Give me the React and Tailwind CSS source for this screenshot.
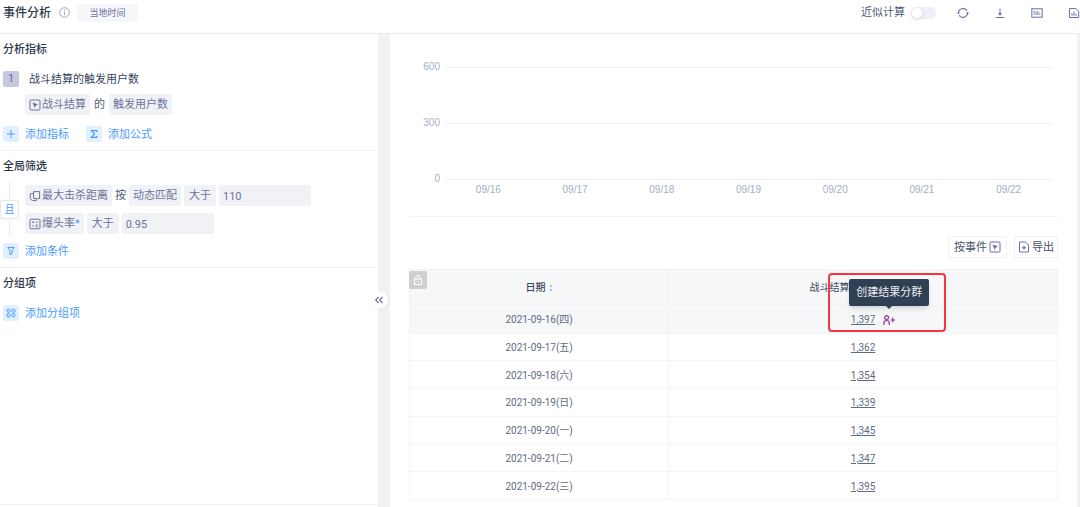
import React from 'react';

const rows = [
  ['2021-09-16(四)', '1,397'],
  ['2021-09-17(五)', '1,362'],
  ['2021-09-18(六)', '1,354'],
  ['2021-09-19(日)', '1,339'],
  ['2021-09-20(一)', '1,345'],
  ['2021-09-21(二)', '1,347'],
  ['2021-09-22(三)', '1,395'],
];
const days = ['09/16', '09/17', '09/18', '09/19', '09/20', '09/21', '09/22'];
const ticks = ['600', '300', '0'];

function Icon({ className = 'size-3', children, width = 1 }) {
  return (
    <svg
      viewBox="0 0 12 12"
      className={`shrink-0 ${className}`}
      fill="none"
      stroke="currentColor"
      strokeWidth={width}
      aria-hidden="true"
    >
      {children}
    </svg>
  );
}

function EventIcon({ className }) {
  return (
    <Icon className={className}>
      <rect x="1" y="1" width="10" height="10" rx="1" />
      <path d="M3.8 3.8l4.8 1.7-2 .9-.9 2.2z" fill="currentColor" strokeWidth="0.4" />
    </Icon>
  );
}

function Tag({ children, className = '' }) {
  return (
    <button
      type="button"
      className={`flex h-[21px] shrink-0 items-center justify-center gap-px rounded-xs bg-[#f1f2f6] px-1 pt-px text-[#6d729c] ${className}`}
    >
      {children}
    </button>
  );
}

function ValueInput({ label, value }) {
  return (
    <input
      type="text"
      aria-label={label}
      defaultValue={value}
      className="h-[21px] w-[92px] rounded-xs bg-[#f1f2f6] px-1 pt-px text-[#6d729c] outline-none"
    />
  );
}

function AddButton({ icon, children }) {
  return (
    <button type="button" className="flex h-4 items-center gap-1.5 text-[#4a9cfb]">
      <span className="flex size-4 items-center justify-center rounded-xs bg-[#e1f0fe]">{icon}</span>
      <span className="pt-px">{children}</span>
    </button>
  );
}

function SectionTitle({ children }) {
  return <h2 className="h-4 font-medium leading-4 text-[#2c374b]">{children}</h2>;
}

function SortIcon() {
  return (
    <svg viewBox="0 0 4 8" className="h-2 w-1 text-[#a9bdd6]" fill="currentColor" aria-hidden="true">
      <path d="M2 .6L3.8 3H.2zM2 7.4L.2 5h3.6z" />
    </svg>
  );
}

function Header() {
  return (
    <header className="flex h-[34px] items-center border-b border-[#e9eaf0] pb-2 pl-[3px]">
      <h1 className="pt-px text-[12px] font-medium text-[#2c374b]">事件分析</h1>
      <Icon className="ml-2 size-[11px] text-[#8a90b4]" width={0.9}>
        <circle cx="6" cy="6" r="5.2" />
        <path d="M6 5.2v3.6M6 3v1.2" />
      </Icon>
      <button type="button" className="ml-[7px] h-[18px] w-[61px] rounded-xs bg-[#f6f7fa] text-[9px] text-[#6d729c]">
        当地时间
      </button>
      <label className="ml-auto flex items-center gap-1.5 text-[#505c74]">
        <span className="pt-px">近似计算</span>
        <input type="checkbox" role="switch" className="peer sr-only" />
        <span className="flex h-3 w-[25px] rounded-full bg-[#eff0f5] peer-checked:justify-end peer-checked:bg-[#4a9cfb]">
          <span className="size-3 rounded-full border border-[#ececf1] bg-white shadow-sm" />
        </span>
      </label>
      <div className="ml-[21px] flex gap-[25px] text-[#6a70a4]">
        <button type="button" aria-label="刷新">
          <Icon width={1.1}>
            <path d="M1.5 6.400A4.600 4.600 0 0 1 10 3.800M10.500 5.600A4.600 4.600 0 0 1 2 8.200" />
            <path d="M9 5.400h3L10.500 7.400zM3 6.600H0l1.500-2z" fill="currentColor" stroke="none" />
          </Icon>
        </button>
        <button type="button" aria-label="下载">
          <Icon>
            <path d="M6 1.500v6.500M1.800 10.500h8.400" />
            <path d="M4 6h4L6 8.800z" fill="currentColor" stroke="none" />
          </Icon>
        </button>
        <button type="button" aria-label="SQL">
          <Icon>
            <rect x="0.8" y="1.8" width="10.4" height="8.4" />
            <path
              d="M4.2 4.6H2.6V6h1.5v1.4H2.5M5.2 4.6h1.5v2.8H5.2zM6.3 6.8l.8 1M8 4.4v3h1.6"
              strokeWidth="0.6"
            />
          </Icon>
        </button>
        <button type="button" aria-label="报表">
          <Icon>
            <path d="M1.500 1.500h6.300l2.900 2.800v6.200H1.500z" />
            <path d="M4 6.200v2.600M6 4.600v4.200M8 6.800v2" />
          </Icon>
        </button>
      </div>
    </header>
  );
}

function Sidebar() {
  return (
    <aside className="flex w-[378px] shrink-0 flex-col">
      <section className="border-b border-[#f0f1f4] pt-2 pr-1 pb-2 pl-[3px]">
        <SectionTitle>分析指标</SectionTitle>
        <div className="mt-[13px] flex h-4 items-center gap-[10px]">
          <span className="flex size-4 items-center justify-center rounded-xs bg-[#c5c8df] text-[10px] text-[#5d628c]">
            1
          </span>
          <span className="pt-px text-[#36435a]">战斗结算的触发用户数</span>
        </div>
        <div className="mt-[7px] flex items-center gap-[3px] pl-[22px]">
          <Tag>
            <EventIcon className="size-3" />
            战斗结算
          </Tag>
          <span className="px-px pt-px text-[#505c74]">的</span>
          <Tag>触发用户数</Tag>
        </div>
        <div className="mt-[11px] flex gap-[17px]">
          <AddButton icon={<Icon><path d="M6 2v8M2 6h8" /></Icon>}>添加指标</AddButton>
          <AddButton icon={<Icon width={1.2}><path d="M8.800 4V2.600H3.400L6.600 6 3.400 9.400h5.400V8" /></Icon>}>添加公式</AddButton>
        </div>
      </section>

      <section className="border-b border-[#f0f1f4] pt-2 pb-2">
        <div className="pl-[3px]">
          <SectionTitle>全局筛选</SectionTitle>
        </div>
        <div className="mt-[7px] flex gap-[6px]">
          <div className="flex w-[19px] flex-col items-center">
            <span className="w-px flex-1 bg-[#e6e8ee]" />
            <button
              type="button"
              className="flex h-[19px] w-[19px] items-center justify-center rounded-xs border border-[#e4e6ec] pt-px text-[10px] text-[#4a9cfb]"
            >
              且
            </button>
            <span className="w-px flex-1 bg-[#e6e8ee]" />
          </div>
          <div className="flex flex-col gap-[7px] py-[3px]">
            <div className="flex items-center gap-[3px]">
              <Tag>
                <Icon>
                  <path d="M4.600 8.400V1.600h6v6.800H8.400M4.600 3.600H1.200v5.200l2.400 1.800h3.800V8.400H4.600" />
                </Icon>
                最大击杀距离
              </Tag>
              <span className="pt-px text-[#505c74]">按</span>
              <Tag>动态匹配</Tag>
              <Tag className="min-w-8">大于</Tag>
              <ValueInput label="最大击杀距离" value="110" />
            </div>
            <div className="flex items-center gap-[3px]">
              <Tag>
                <Icon>
                  <rect x="1" y="1.2" width="10" height="9.6" rx="1" />
                  <path d="M3 4.200h2M4 3.200v2M3 7.800h2M6.400 4.200h2.800M6.400 7h2.800M6.400 8.800h2.800" strokeWidth="0.8" />
                </Icon>
                <span>
                  爆头率<span className="text-[#4a9cfb]">*</span>
                </span>
              </Tag>
              <Tag className="min-w-8">大于</Tag>
              <ValueInput label="爆头率" value="0.95" />
            </div>
          </div>
        </div>
        <div className="mt-[6px] pl-[3px]">
          <AddButton icon={<Icon><path d="M2.800 2.400h6.400L7 5.600v3L5 9.800V5.600z" /></Icon>}>添加条件</AddButton>
        </div>
      </section>

      <section className="pt-2 pl-[3px]">
        <SectionTitle>分组项</SectionTitle>
        <div className="mt-[13px]">
          <AddButton
            icon={
              <Icon>
                <rect x="2" y="2.2" width="3" height="3" rx="1" />
                <rect x="7" y="2.2" width="3" height="3" rx="1" />
                <rect x="2" y="6.8" width="3" height="3" rx="1" />
                <rect x="7" y="6.8" width="3" height="3" rx="1" />
              </Icon>
            }
          >
            添加分组项
          </AddButton>
        </div>
      </section>
      <div className="mt-auto h-[3px] border-t border-[#f0f1f4]" />
    </aside>
  );
}

function Chart() {
  return (
    <div className="border-b border-[#f2f3f6] pt-[29px] pr-1.5 pb-5 font-['Liberation_Sans','Noto_Sans_CJK_SC',sans-serif] text-[10px] text-[#a3aec5]">
      <div className="flex flex-col gap-12">
        {ticks.map((t) => (
          <div key={t} className="flex h-2 items-center gap-[5px] leading-2">
            <span className="w-[31px] text-right">{t}</span>
            <span className="h-px flex-1 bg-[#eff1f6]" />
          </div>
        ))}
      </div>
      <div className="grid grid-cols-7 pt-px pl-9 text-center leading-3">
        {days.map((d) => (
          <span key={d}>{d}</span>
        ))}
      </div>
    </div>
  );
}

function CreateGroupButton() {
  return (
    <span className="absolute top-1/2 left-full ml-2 flex -translate-y-1/2">
      <button type="button" aria-label="创建结果分群" className="text-[#9a2f9c]">
        <Icon width={1.2}>
          <circle cx="3.6" cy="3.6" r="1.9" />
          <path d="M.9 11V9.200c0-1.600 1-2.700 2.700-2.700s2.700 1.100 2.700 2.700V11M7.600 6H12M9.800 3.800v4.400" />
        </Icon>
      </button>
      <span
        role="tooltip"
        className="absolute bottom-full left-1/2 mb-2 flex h-[27px] w-20 -translate-x-1/2 items-center justify-center rounded-xs bg-[#313f55] pt-px text-[11px] text-[#e8ebf0] shadow-md"
      >
        创建结果分群
        <svg viewBox="0 0 6 3" className="absolute top-full left-1/2 h-[3px] w-1.5 -translate-x-1/2" aria-hidden="true">
          <path d="M0 0h6L3 3z" fill="#313f55" />
        </svg>
      </span>
      <span className="pointer-events-none absolute -bottom-[6px] left-1/2 h-[59px] w-[118px] -translate-x-[61px] rounded border-2 border-[#f8343f]" />
    </span>
  );
}

function ResultTable() {
  return (
    <div className="relative mt-[11px]">
      <table className="h-[231px] w-full table-fixed border-collapse border border-[#f3f4f7] text-center text-[10px] leading-3 text-[#5f6b82]">
        <thead>
          <tr className="h-9 bg-[#f5f7f9] text-[#3b475c]">
            <th scope="col" className="w-[40%] border border-[#f0f1f5] font-medium">
              <span className="inline-flex items-center gap-[3px]">
                日期
                <SortIcon />
              </span>
            </th>
            <th scope="col" className="border border-[#f0f1f5] font-normal">
              <span className="inline-flex items-center gap-[3px]">
                战斗结算的触发用户数
                <SortIcon />
              </span>
            </th>
          </tr>
        </thead>
        <tbody>
          {rows.map(([date, count], i) => (
            <tr key={date} className="first:bg-[#f5f7f9]">
              <td className="border border-[#f3f4f7] pt-[2px]">{date}</td>
              <td className="border border-[#f3f4f7] pt-[2px]">
                <span className="relative inline-block">
                  <a href="#detail" className="underline underline-offset-1">
                    {count}
                  </a>
                  {i === 0 && <CreateGroupButton />}
                </span>
              </td>
            </tr>
          ))}
        </tbody>
      </table>
      <button
        type="button"
        aria-label="锁定"
        className="absolute top-[2px] left-0 flex size-[18px] items-center justify-center rounded-xs bg-[#cecfd0] text-white"
      >
        <Icon>
          <rect x="2.5" y="5" width="7" height="5.5" />
          <path d="M4 5V3.400a2 2 0 0 1 4 0V5M6 7v1.600" />
        </Icon>
      </button>
    </div>
  );
}

export default function App() {
  return (
    <div className="flex min-h-screen flex-col overflow-hidden bg-white font-[Roboto,'Noto_Sans_CJK_SC',sans-serif] text-[11px] leading-4">
      <Header />
      <div className="flex flex-1">
        <Sidebar />
        <div className="relative w-3 shrink-0 bg-[#f0f1f6]">
          <button
            type="button"
            aria-label="收起"
            className="absolute top-[257px] -left-2 flex size-[18px] items-center justify-center rounded-full bg-white text-[#6a70a4] shadow-xs"
          >
            <Icon width={1.2}>
              <path d="M5.600 3L2.800 6l2.800 3M9.400 3L6.600 6l2.800 3" />
            </Icon>
          </button>
        </div>
        <main className="min-w-0 flex-1 px-[19px]">
          <Chart />
          <div className="mt-[19px] flex justify-end gap-[7px] text-[#48546b]">
            <button type="button" className="flex h-[22px] items-center gap-[2px] border border-[#f0f1f5] px-[5px]">
              <span className="pt-px">按事件</span>
              <span className="text-[#6a70a4]">
                <EventIcon className="size-3" />
              </span>
            </button>
            <button type="button" className="flex h-[22px] items-center gap-[2px] border border-[#f0f1f5] px-[3px]">
              <span className="text-[#6a70a4]">
                <Icon>
                  <path d="M1.500 1h6l3 3v7h-9z" />
                  <path d="M6 4.600v3M4.400 6.600L6 8.400l1.600-1.800z" />
                </Icon>
              </span>
              <span className="pt-px">导出</span>
            </button>
          </div>
          <ResultTable />
        </main>
        <div className="w-[3px] shrink-0 bg-[#f0f1f6]" />
      </div>
    </div>
  );
}
